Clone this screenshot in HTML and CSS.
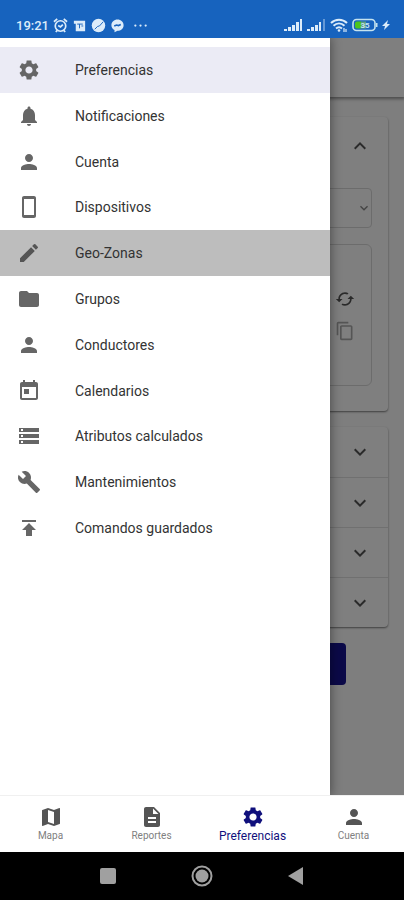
FILE: index.html
```html
<!DOCTYPE html>
<html lang="es">
<head>
<meta charset="utf-8">
<meta name="viewport" content="width=device-width, initial-scale=1">
<title>Preferencias</title>
<link rel="stylesheet" href="styles.css">
</head>
<body>
<svg class="defs" aria-hidden="true">
  <symbol id="gear" viewBox="0 0 24 24"><path d="M19.14 12.94c.04-.3.06-.61.06-.94 0-.32-.02-.64-.07-.94l2.03-1.58c.18-.14.23-.41.12-.61l-1.92-3.32c-.12-.22-.37-.29-.59-.22l-2.39.96c-.5-.38-1.03-.7-1.62-.94l-.36-2.54c-.04-.24-.24-.41-.48-.41h-3.84c-.24 0-.43.17-.47.41l-.36 2.54c-.59.24-1.13.57-1.62.94l-2.39-.96c-.22-.08-.47 0-.59.22L2.74 8.87c-.12.21-.08.47.12.61l2.03 1.58c-.05.3-.09.63-.09.94s.02.64.07.94l-2.03 1.58c-.18.14-.23.41-.12.61l1.92 3.32c.12.22.37.29.59.22l2.39-.96c.5.38 1.03.7 1.62.94l.36 2.54c.05.24.24.41.48.41h3.84c.24 0 .44-.17.47-.41l.36-2.54c.59-.24 1.13-.56 1.62-.94l2.39.96c.22.08.47 0 .59-.22l1.92-3.32c.12-.22.07-.47-.12-.61zM12 15.6c-1.98 0-3.6-1.62-3.6-3.6s1.62-3.6 3.6-3.6 3.6 1.62 3.6 3.6-1.62 3.6-3.6 3.6"/></symbol>
  <symbol id="bell" viewBox="0 0 24 24"><path d="M12 22c1.100 0 2-.9 2-2h-4c0 1.100.89 2 2 2zm6-6v-5c0-3.070-1.640-5.640-4.500-6.320V4c0-.83-.67-1.500-1.500-1.500s-1.500.67-1.500 1.500v.68C7.630 5.360 6 7.920 6 11v5l-2 2v1h16v-1z"/></symbol>
  <symbol id="person" viewBox="0 0 24 24"><path d="M12 12c2.210 0 4-1.790 4-4s-1.790-4-4-4-4 1.790-4 4 1.790 4 4 4m0 2c-2.670 0-8 1.340-8 4v2h16v-2c0-2.660-5.330-4-8-4"/></symbol>
  <symbol id="phone" viewBox="0 0 24 24"><path d="M17 1.010 7 1c-1.100 0-2 .9-2 2v18c0 1.100.9 2 2 2h10c1.100 0 2-.9 2-2V3c0-1.100-.9-1.990-2-1.990M17 20H7V4h10z"/></symbol>
  <symbol id="pencil" viewBox="0 0 24 24"><path d="M3 17.250V21h3.750L17.810 9.940l-3.750-3.750zM20.710 7.040c.39-.39.39-1.020 0-1.410l-2.340-2.340a.996.996 0 0 0-1.410 0l-1.830 1.830 3.750 3.750z"/></symbol>
  <symbol id="folder" viewBox="0 0 24 24"><path d="M10 4H4c-1.100 0-1.990.9-1.990 2L2 18c0 1.100.9 2 2 2h16c1.100 0 2-.9 2-2V8c0-1.100-.9-2-2-2h-8z"/></symbol>
  <symbol id="calendar" viewBox="0 0 24 24"><path d="M19 3h-1V1h-2v2H8V1H6v2H5c-1.110 0-1.990.9-1.990 2L3 19c0 1.100.89 2 2 2h14c1.100 0 2-.9 2-2V5c0-1.100-.9-2-2-2m0 16H5V8h14zM7 10h5v5H7z"/></symbol>
  <symbol id="storage" viewBox="0 0 24 24"><path d="M2 20h20v-4H2zm2-3h2v2H4zM2 4v4h20V4zm4 3H4V5h2zm-4 7h20v-4H2zm2-3h2v2H4z"/></symbol>
  <symbol id="wrench" viewBox="0 0 24 24"><path d="m22.700 19-9.100-9.100c.9-2.300.4-5-1.500-6.900-2-2-5-2.400-7.400-1.300L9 6 6 9 1.600 4.700C.4 7.100.9 10.100 2.900 12.100c1.900 1.900 4.600 2.400 6.900 1.500l9.100 9.100c.4.4 1 .4 1.400 0l2.300-2.300c.5-.4.5-1.100.1-1.400"/></symbol>
  <symbol id="publish" viewBox="0 0 24 24"><path d="M5 4v2h14V4zm0 10h4v6h6v-6h4l-7-7z"/></symbol>
  <symbol id="map" viewBox="0 0 24 24"><path d="m20.500 3-.16.03L15 5.100 9 3 3.360 4.900c-.21.07-.36.25-.36.480V20.500c0 .28.22.5.5.5l.16-.03L9 18.900l6 2.100 5.640-1.900c.21-.07.36-.25.36-.480V3.500c0-.28-.22-.5-.5-.5M15 19l-6-2.110V5l6 2.110z"/></symbol>
  <symbol id="report" viewBox="0 0 24 24"><path d="M14 2H6c-1.100 0-1.990.9-1.990 2L4 20c0 1.100.89 2 1.990 2H18c1.100 0 2-.9 2-2V8zm2 16H8v-2h8zm0-4H8v-2h8zm-3-5V3.500L18.500 9z"/></symbol>
  <symbol id="down" viewBox="0 0 24 24"><path d="M7.410 8.590 12 13.170l4.590-4.580L18 10l-6 6-6-6z"/></symbol>
  <symbol id="up" viewBox="0 0 24 24"><path d="m12 8-6 6 1.410 1.410L12 10.830l4.590 4.580L18 14z"/></symbol>
  <symbol id="sync" viewBox="0 0 24 24"><path d="m19 8-4 4h3c0 3.310-2.690 6-6 6-1.010 0-1.970-.25-2.800-.7l-1.460 1.460C8.970 19.540 10.430 20 12 20c4.420 0 8-3.580 8-8h3zM6 12c0-3.310 2.690-6 6-6 1.010 0 1.970.25 2.800.7l1.460-1.460C15.030 4.460 13.570 4 12 4c-4.420 0-8 3.580-8 8H1l4 4 4-4z"/></symbol>
  <symbol id="copy" viewBox="0 0 24 24"><path d="M16 1H4c-1.100 0-2 .9-2 2v14h2V3h12zm3 4H8c-1.100 0-2 .9-2 2v14c0 1.100.9 2 2 2h11c1.100 0 2-.9 2-2V7c0-1.100-.9-2-2-2m0 16H8V7h11z"/></symbol>
</svg>

<header class="status">
  <div class="status-group">
    <span class="clock">19:21</span>
    <svg class="s-icon" viewBox="0 0 16 16" fill="none" stroke="currentColor" stroke-width="1.800"><circle cx="8" cy="8.500" r="5.600"/><path d="M1 4 4.500 1M15 4l-3.500-3M3 15l1.500-1.800M13 15l-1.500-1.800M5.500 8 8 9.500 10.500 7"/></svg>
    <svg class="s-icon" viewBox="0 0 16 16"><path fill="currentColor" d="M2 3h12v11H4V6H2z"/><path d="M5.500 6.500h6M8 6.500V11M10 8.500h2" stroke="#1763be" fill="none"/></svg>
    <svg class="s-icon" viewBox="0 0 16 16"><circle cx="8" cy="8" r="7.200" fill="currentColor"/><path d="m4 12 3-3 2-.5L13 4" stroke="#1763be" fill="none"/></svg>
    <svg class="s-icon" viewBox="0 0 16 16"><path fill="currentColor" d="M8 1.500c3.700 0 6.500 2.700 6.500 6.100s-2.800 6.100-6.500 6.100l-3.200 1.400v-2.300C2.700 11.600 1.500 9.800 1.500 7.600c0-3.400 2.800-6.100 6.500-6.100"/><path d="m4.500 8.500 2.500-1 2 .5 2.500-1" stroke="#1763be" stroke-width="1.800" fill="none"/></svg>
    <svg class="s-icon dots" viewBox="0 0 16 16" fill="currentColor"><circle cx="2.500" cy="8" r="1.200"/><circle cx="8" cy="8" r="1.200"/><circle cx="13.500" cy="8" r="1.200"/></svg>
  </div>
  <div class="status-group">
    <svg class="signal" viewBox="0 0 19 14" fill="currentColor"><path d="M0 11h3v2H0zM4 9h3v4H4zM8 7h3v6H8zM12 4h3v9h-3zM16 1h2v12h-2z"/></svg>
    <svg class="signal" viewBox="0 0 19 14" fill="currentColor"><path d="M0 11h3v2H0zM4 9h3v4H4zM8 7h3v6H8zM12 4h2v9h-2z"/><path opacity=".4" d="M16 1h2v12h-2z"/></svg>
    <svg class="wifi" viewBox="0 0 18 14" fill="none" stroke="currentColor" stroke-width="2"><path d="M1 5c4.500-4.500 11.500-4.500 16 0M3.500 7.800c3.300-3 7.700-3 11 0M6 10.500c2-1.700 4-1.700 6 0"/><circle cx="9" cy="12.500" r="1.300" fill="currentColor" stroke="none"/><path d="M14 10v4M16 14v-3" stroke-width="1.200"/></svg>
    <svg class="battery" viewBox="0 0 26 14"><rect x="1" y="1.500" width="22" height="11" rx="3.500" fill="none" stroke="#c5e3ef" stroke-width="1.600"/><path d="M24 5h1.500v4H24z" fill="#c5e3ef"/><path d="M5 3.500h4v7H5a2 2 0 0 1-2-2v-3a2 2 0 0 1 2-2" fill="#4bc51d"/><path d="M9 3.500h5v7H9z" fill="#5c9f83"/><text x="13" y="10" text-anchor="middle">35</text></svg>
    <svg class="bolt" viewBox="0 0 8 14" fill="currentColor"><path d="M6 2 0 8h3l-1 4 6-6H5z"/></svg>
  </div>
</header>

<div class="stage">
  <main class="page">
    <div class="appbar"></div>
    <div class="content">
      <section class="card">
        <button class="summary" aria-label="Contraer"><svg class="icon"><use href="#up"/></svg></button>
        <div class="details">
          <div class="field">
            <select aria-label="Opciones"><option></option></select>
            <svg class="small-icon"><use href="#down"/></svg>
          </div>
          <div class="token">
            <button aria-label="Renovar"><svg class="token-icon"><use href="#sync"/></svg></button>
            <button aria-label="Copiar" disabled><svg class="token-icon"><use href="#copy"/></svg></button>
          </div>
        </div>
      </section>
      <section class="card">
        <button class="summary" aria-label="Expandir sección 2"><svg class="icon"><use href="#down"/></svg></button>
        <button class="summary" aria-label="Expandir sección 3"><svg class="icon"><use href="#down"/></svg></button>
        <button class="summary" aria-label="Expandir sección 4"><svg class="icon"><use href="#down"/></svg></button>
        <button class="summary" aria-label="Expandir sección 5"><svg class="icon"><use href="#down"/></svg></button>
      </section>
      <button class="save" aria-label="Guardar"></button>
    </div>
  </main>
  <div class="scrim"></div>
  <nav class="drawer">
    <a class="item selected" href="#"><svg class="icon"><use href="#gear"/></svg>Preferencias</a>
    <a class="item" href="#"><svg class="icon"><use href="#bell"/></svg>Notificaciones</a>
    <a class="item" href="#"><svg class="icon"><use href="#person"/></svg>Cuenta</a>
    <a class="item" href="#"><svg class="icon"><use href="#phone"/></svg>Dispositivos</a>
    <a class="item pressed" href="#"><svg class="icon"><use href="#pencil"/></svg>Geo-Zonas</a>
    <a class="item" href="#"><svg class="icon"><use href="#folder"/></svg>Grupos</a>
    <a class="item" href="#"><svg class="icon"><use href="#person"/></svg>Conductores</a>
    <a class="item" href="#"><svg class="icon"><use href="#calendar"/></svg>Calendarios</a>
    <a class="item" href="#"><svg class="icon"><use href="#storage"/></svg>Atributos calculados</a>
    <a class="item" href="#"><svg class="icon"><use href="#wrench"/></svg>Mantenimientos</a>
    <a class="item" href="#"><svg class="icon"><use href="#publish"/></svg>Comandos guardados</a>
  </nav>
</div>

<nav class="tabs">
  <a class="tab" href="#"><svg class="icon"><use href="#map"/></svg><span>Mapa</span></a>
  <a class="tab" href="#"><svg class="icon"><use href="#report"/></svg><span>Reportes</span></a>
  <a class="tab active" href="#"><svg class="icon"><use href="#gear"/></svg><span>Preferencias</span></a>
  <a class="tab" href="#"><svg class="icon"><use href="#person"/></svg><span>Cuenta</span></a>
</nav>

<footer class="system">
  <button aria-label="Recientes"><svg viewBox="0 0 24 24"><rect x="4" y="4" width="16" height="16" rx="2" fill="#a0a0a0"/></svg></button>
  <button aria-label="Inicio"><svg viewBox="0 0 24 24"><circle cx="12" cy="12" r="9.500" fill="none" stroke="#a0a0a0" stroke-width="2"/><circle cx="12" cy="12" r="6.500" fill="#a0a0a0"/></svg></button>
  <button aria-label="Atrás"><svg viewBox="0 0 24 24"><path d="M19 3v18L4 12z" fill="#a0a0a0"/></svg></button>
</footer>
</body>
</html>
```
FILE: styles.css
```css
* { box-sizing: border-box; }

body {
  margin: 0;
  min-height: 100vh;
  display: flex;
  flex-direction: column;
  font-family: Roboto, "Liberation Sans", sans-serif;
  background: #fff;
}

button {
  margin: 0;
  padding: 0;
  border: 0;
  background: none;
  color: inherit;
  font: inherit;
}

a { color: inherit; text-decoration: none; }
svg { display: block; flex: none; }
.defs { position: absolute; width: 0; height: 0; }
.icon { width: 24px; height: 24px; fill: currentColor; }

/* Status bar */
.status {
  height: 38px;
  padding: 12px 14px 0 16px;
  display: flex;
  justify-content: space-between;
  background: #1763be;
  color: #dcecfa;
}
.status-group { display: flex; align-items: center; gap: 4px; }
.clock { font-size: 13px; font-weight: 500; }
.s-icon { width: 15px; height: 15px; }
.dots { margin-left: 4px; }
.signal { width: 19px; height: 14px; }
.wifi { width: 18px; height: 14px; }
.battery { width: 26px; height: 14px; }
.battery text { font-size: 8px; font-weight: 700; fill: #c5e3ef; }
.bolt { width: 8px; height: 14px; }

/* Page behind the drawer */
.stage {
  position: relative;
  flex: 1;
  display: flex;
  overflow: hidden;
}
.page { flex: 1; background: #fcfcfc; color: #555; }
.appbar {
  height: 59px;
  background: #fff;
  box-shadow: 0 1px 3px 1px rgba(0, 0, 0, .4);
}
.content {
  padding: 20px 16px;
  display: flex;
  flex-direction: column;
  gap: 16px;
}
.card {
  background: #fff;
  border-radius: 4px;
  box-shadow: 0 1px 2px rgba(0, 0, 0, .5);
}
.summary {
  width: 100%;
  height: 50px;
  padding-right: 16px;
  display: flex;
  align-items: center;
  justify-content: flex-end;
}
.summary + .summary { border-top: 1px solid #e0e0e0; }
.details {
  padding: 13px 16px 25px;
  display: flex;
  flex-direction: column;
  gap: 16px;
}
.card:first-child .summary { height: 58px; }
.field { position: relative; }
.field select {
  width: 100%;
  height: 40px;
  display: block;
  appearance: none;
  border: 1px solid #d8d8d8;
  border-radius: 4px;
  background: transparent;
}
.small-icon {
  position: absolute;
  right: 0;
  top: 12px;
  width: 16px;
  height: 16px;
  fill: #888;
}
.token {
  height: 142px;
  padding-right: 16px;
  border: 1px solid #d8d8d8;
  border-radius: 6px;
  display: flex;
  flex-direction: column;
  align-items: flex-end;
  justify-content: center;
  gap: 12px;
}
.token-icon { width: 20px; height: 20px; fill: currentColor; }
.token button:disabled { color: #aaa; }
.save {
  width: 170px;
  height: 42px;
  margin-right: 42px;
  align-self: flex-end;
  border-radius: 4px;
  background: #161290;
}

.scrim {
  position: absolute;
  inset: 0;
  background: rgba(0, 0, 0, .5);
}

/* Drawer */
.drawer {
  position: absolute;
  inset: 0 auto 0 0;
  width: 330px;
  padding-top: 9px;
  display: grid;
  grid-template-rows: repeat(11, 1fr);
  padding-bottom: 244px;
  background: #fff;
  box-shadow: 0 0 10px 1px rgba(0, 0, 0, .4);
}
.item {
  padding: 0 17px;
  display: flex;
  align-items: center;
  gap: 34px;
  color: #333;
  font-size: 14px;
}
.item .icon { color: #666; }
.selected { background: #ebebf5; }
.pressed { background: #bdbdbd; }
.pressed .icon { color: #555; }

/* Bottom tabs */
.tabs {
  position: relative;
  height: 57px;
  display: grid;
  grid-template-columns: repeat(4, 1fr);
  background: #fff;
  border-top: 1px solid #f0f0f0;
}
.tab {
  display: flex;
  flex-direction: column;
  align-items: center;
  justify-content: center;
  color: #808080;
  font-size: 10px;
  line-height: 14px;
}
.tab .icon { color: #555; }
.active, .active .icon { color: #10107c; }
.active { font-size: 12px; }

/* System navigation */
.system {
  height: 48px;
  display: flex;
  align-items: center;
  justify-content: center;
  gap: 70px;
  background: #000;
}
.system svg { width: 24px; height: 24px; }
```
